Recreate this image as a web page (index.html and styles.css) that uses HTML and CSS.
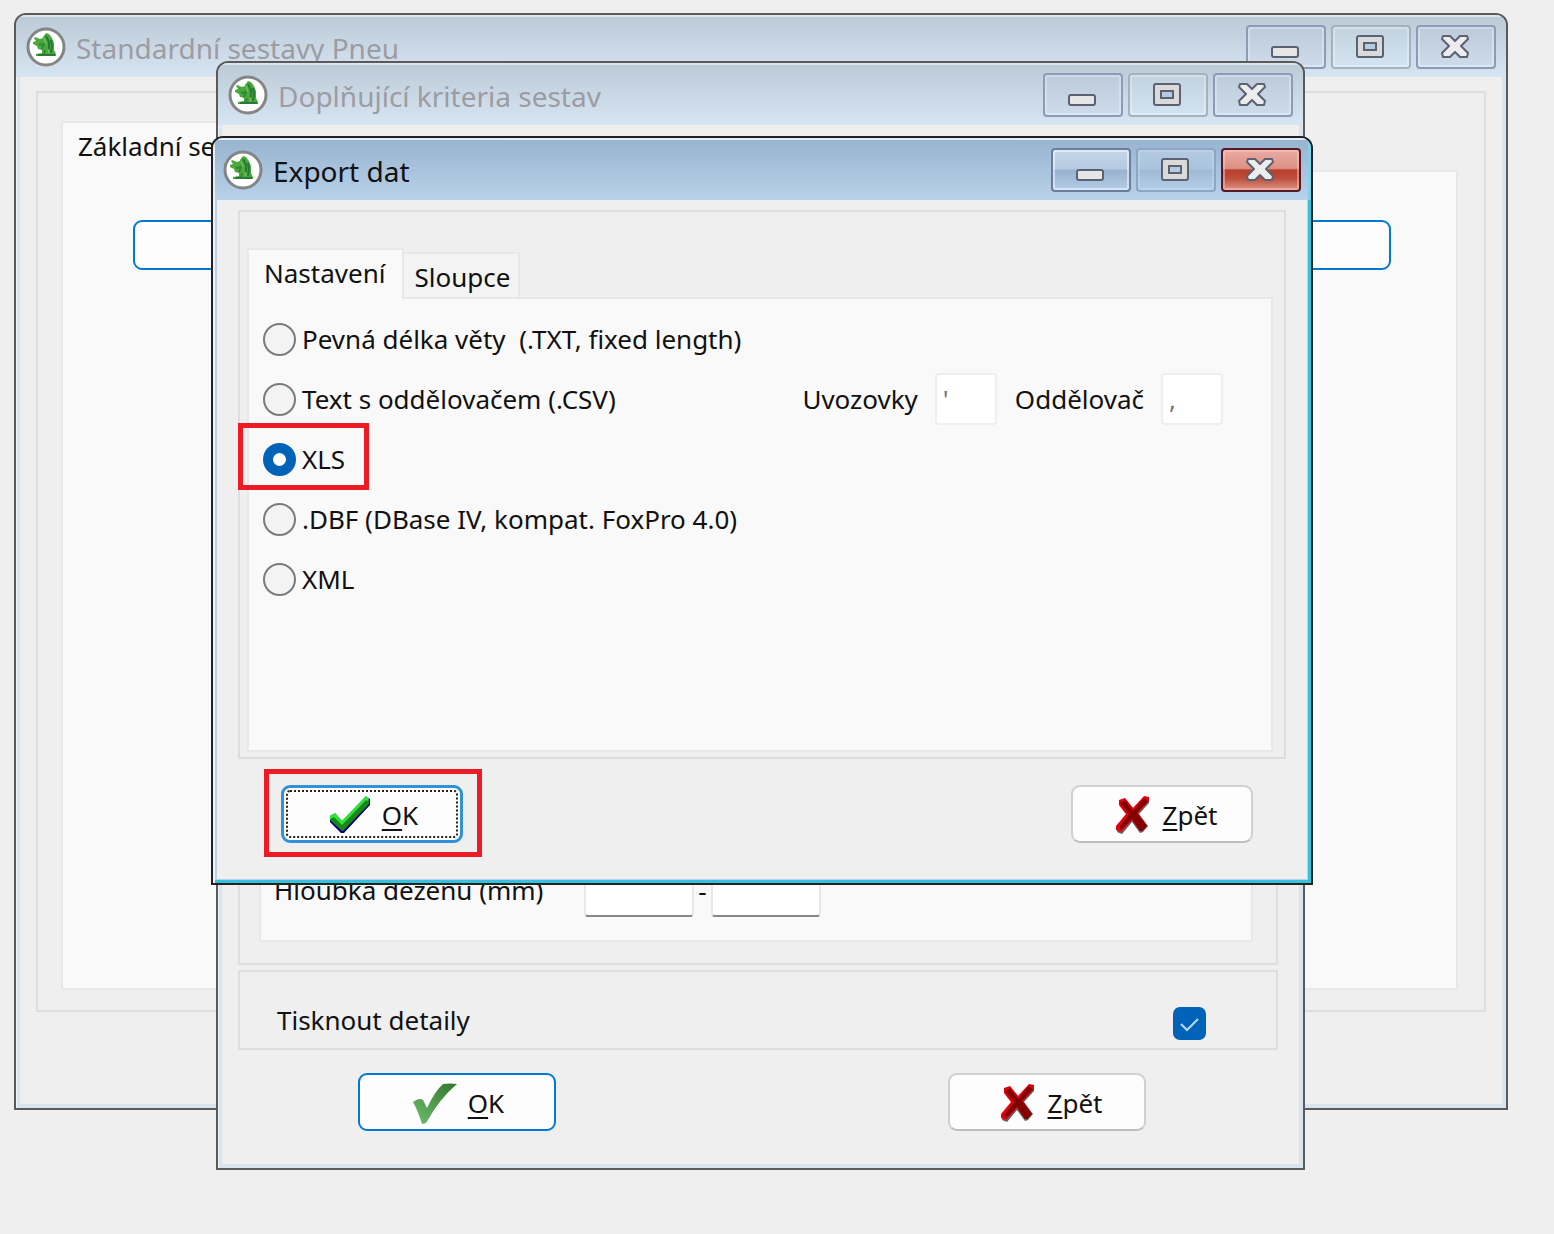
FILE: index.html
```
<!DOCTYPE html>
<html lang="cs">
<head>
  <meta charset="utf-8">
  <title>Export dat</title>
  <link rel="stylesheet" href="styles.css">
</head>
<body>
  <!-- shared icons -->
  <svg class="sprite" aria-hidden="true">
    <symbol id="logo" viewBox="0 0 40 40">
      <circle cx="20" cy="20" r="18" fill="#fff" stroke="#858585" stroke-width="3"/>
      <path d="M17 10l3-4 3 1 3 4 2 5v7l2 4v2H10v-2l6-1v-3l-4-1-1-3-4-2v-2l3-1-2-3 1-1 5 2 3-1z" fill="#4aa83c"/>
      <path d="M20 9l3 6v7M25 13l1 6-1 7M12 28h17" fill="none" stroke="#27783a" stroke-width="2"/>
      <path d="M13 18l5-1-2 5M19 23l-1 4" fill="none" stroke="#2f8a35" stroke-width="2"/>
      <path d="M18 11l2 6M22 23l1 3" fill="none" stroke="#86cc5a" stroke-width="1"/>
    </symbol>
    <symbol id="minimize" viewBox="0 0 28 24">
      <rect x="1" y="12" width="26" height="10" rx="2" fill="#e6e6e6" stroke="#5c6173" stroke-width="2"/>
    </symbol>
    <symbol id="maximize" viewBox="0 0 28 24">
      <rect x="1" y="1" width="26" height="21" rx="2" fill="#dadada" stroke="#5c6173" stroke-width="2"/>
      <rect x="8" y="8" width="12" height="7" fill="#b4cbe2" stroke="#5c6173" stroke-width="2"/>
    </symbol>
    <symbol id="close" viewBox="0 0 28 24">
      <path d="M2 1h7l5 5 5-5h7l1 3-7 7 7 7-1 4h-7l-5-5-5 5H2l-1-4 7-7-7-7z" fill="#ececec" stroke="#5c6173" stroke-width="2" stroke-linejoin="round"/>
    </symbol>
    <symbol id="check" viewBox="0 0 42 38">
      <path d="M1 20l5-2 7 8L37 1l4 2v6L15 37h-3L1 26z" fill="#00007b"/>
      <path d="M1 20l5-3 7 8L37 0l3 4v4L14 35h-1L1 24z" fill="#188818"/>
      <path d="M1 23v-3l5-3 7 8L37 0l3 4-2 1-1-1-24 25-8-8z" fill="#2be53c"/>
    </symbol>
    <symbol id="check-soft" viewBox="0 0 44 41">
      <linearGradient id="soft" x1="0" y1="1" x2="1" y2="0">
        <stop offset="0" stop-color="#70bd6c"/>
        <stop offset="1" stop-color="#30772e"/>
      </linearGradient>
      <path d="M0 19q6-5 10-2l4 8Q22 8 30 1q7-1 14 0Q27 15 13 40l-4 1Q5 28 0 19z" fill="url(#soft)"/>
    </symbol>
    <symbol id="cross" viewBox="0 0 34 38">
      <path d="M4 5l6-1 8 9L28 2l5 1v4L23 18l9 12-5 6-3 1-8-11L6 38l-5-2 1-5 9-12L4 10z" fill="#66605c"/>
      <path d="M3 4l6-2 8 10L28 0l5 1v4L22 17l9 13-5 5h-2l-8-11L5 36l-5-2v-4l10-12-7-9z" fill="#e5000c"/>
      <path d="M4 7l5-3 8 11L28 2l4 3-11 12 10 13-5 5h-2l-8-12L5 34l-2-3 10-13z" fill="#850000"/>
    </symbol>
  </svg>

  <main class="desktop">
    <section class="window window-reports">
      <header class="titlebar">
        <svg class="logo"><use href="#logo"/></svg>
        <h2>Standardní sestavy Pneu</h2>
        <div class="controls">
          <button type="button" aria-label="Minimalizovat"><svg><use href="#minimize"/></svg></button>
          <button type="button" class="disabled" aria-label="Maximalizovat"><svg><use href="#maximize"/></svg></button>
          <button type="button" aria-label="Zavřít"><svg><use href="#close"/></svg></button>
        </div>
      </header>
      <div class="client">
        <div class="group">
          <div class="tabs">
            <button type="button" class="tab active">Základní sestavy</button>
          </div>
          <div class="page">
            <button type="button" class="wide-btn" aria-label="Sestava"></button>
          </div>
        </div>
      </div>
    </section>

    <section class="window window-criteria">
      <header class="titlebar">
        <svg class="logo"><use href="#logo"/></svg>
        <h2>Doplňující kriteria sestav</h2>
        <div class="controls">
          <button type="button" aria-label="Minimalizovat"><svg><use href="#minimize"/></svg></button>
          <button type="button" class="disabled" aria-label="Maximalizovat"><svg><use href="#maximize"/></svg></button>
          <button type="button" aria-label="Zavřít"><svg><use href="#close"/></svg></button>
        </div>
      </header>
      <div class="client">
        <div class="group">
          <div class="page">
            <div class="range">
              <label for="depth-from">Hloubka dezénu (mm)</label>
              <input type="text" id="depth-from">
              <span>-</span>
              <input type="text" id="depth-to" aria-label="Hloubka dezénu do">
            </div>
          </div>
        </div>
        <div class="group details">
          <label for="print-details">Tisknout detaily</label>
          <input type="checkbox" id="print-details" checked>
        </div>
        <div class="buttons">
          <button type="button" class="btn default"><svg class="icon-soft"><use href="#check-soft"/></svg><span><u>O</u>K</span></button>
          <button type="button" class="btn cancel"><svg class="icon-cross"><use href="#cross"/></svg><span><u>Z</u>pět</span></button>
        </div>
      </div>
    </section>

    <section class="window window-export active">
      <header class="titlebar">
        <svg class="logo"><use href="#logo"/></svg>
        <h1>Export dat</h1>
        <div class="controls">
          <button type="button" aria-label="Minimalizovat"><svg><use href="#minimize"/></svg></button>
          <button type="button" class="disabled" aria-label="Maximalizovat"><svg><use href="#maximize"/></svg></button>
          <button type="button" class="close" aria-label="Zavřít"><svg><use href="#close"/></svg></button>
        </div>
      </header>
      <div class="client">
        <div class="group">
          <div class="tabs">
            <button type="button" class="tab active">Nastavení</button>
            <button type="button" class="tab">Sloupce</button>
          </div>
          <div class="page">
            <div class="row">
              <label class="option"><input type="radio" name="format">Pevná délka věty&nbsp; (.TXT, fixed length)</label>
            </div>
            <div class="row">
              <label class="option"><input type="radio" name="format">Text s oddělovačem (.CSV)</label>
              <div class="separators">
                <label for="quote">Uvozovky</label>
                <input type="text" id="quote" value="'">
                <label for="delimiter">Oddělovač</label>
                <input type="text" id="delimiter" value=",">
              </div>
            </div>
            <div class="row">
              <label class="option marked"><input type="radio" name="format" checked>XLS</label>
            </div>
            <div class="row">
              <label class="option"><input type="radio" name="format">.DBF (DBase IV, kompat. FoxPro 4.0)</label>
            </div>
            <div class="row">
              <label class="option"><input type="radio" name="format">XML</label>
            </div>
          </div>
        </div>
        <div class="buttons">
          <div class="marked">
            <button type="button" class="btn default focused"><svg class="icon-check"><use href="#check"/></svg><span><u>O</u>K</span></button>
          </div>
          <button type="button" class="btn cancel"><svg class="icon-cross"><use href="#cross"/></svg><span><u>Z</u>pět</span></button>
        </div>
      </div>
    </section>
  </main>
</body>
</html>
```
FILE: styles.css
```
:root {
  --face: #efefef;
  --page: #f9f9f9;
  --line: #dedede;
  --line-soft: #e8e8e8;
  --accent: #0078d4;
  --accent-fill: #0063b7;
  --mark: #ed1c24;
}

* {
  box-sizing: border-box;
}

body {
  margin: 0;
  background: var(--face);
  color: #111;
  font-family: Tahoma, "Noto Sans", sans-serif;
  font-size: 26px;
  line-height: 32px;
}

button, input {
  font: inherit;
  color: inherit;
}

.sprite {
  position: absolute;
  width: 0;
  height: 0;
}

.desktop {
  position: relative;
  min-height: 100vh;
  overflow: hidden;
}

/* Windows */
.window {
  position: absolute;
  display: flex;
  flex-direction: column;
  border: 2px solid #5a5a5a;
  border-radius: 12px 12px 0 0;
  background: #d9e4f1;
  box-shadow: inset 1px 1px 0 #f4f7fa;
  overflow: hidden;
}

.window-reports {
  inset: 13px 46px 124px 14px;
}

.window-criteria {
  inset: 61px 249px 64px 216px;
}

.window-export {
  inset: 136px 241px 349px 211px;
}

.window.active {
  border-color: #222;
  background: #bbd1ea;
  box-shadow: inset 2px 2px 0 #eef4fa, inset -3px -3px 0 #34c3dc;
}

.titlebar {
  display: flex;
  align-items: center;
  flex: none;
  height: 62px;
  padding: 4px 10px 0;
  background: linear-gradient(#bccad8, #d7e5f2);
  box-shadow: inset 0 2px 0 #dde5ed;
}

.active > .titlebar {
  background: linear-gradient(#98b3cf, #b9d1ea);
  box-shadow: inset 0 2px 0 #e4edf6, inset 2px 0 0 #e4edf6, inset -3px 0 0 #7ed3ea;
}

.logo {
  width: 40px;
  height: 40px;
  margin: 0 10px 2px 0;
}

.titlebar h1,
.titlebar h2 {
  flex: 1;
  margin: 0;
  font-family: "Segoe UI", "Noto Sans", sans-serif;
  font-size: 28px;
  font-weight: 400;
  white-space: nowrap;
}

.titlebar h2 {
  color: #9c9ca2;
}

.controls {
  display: flex;
  gap: 5px;
  margin-bottom: 2px;
}

.controls button {
  display: flex;
  align-items: center;
  justify-content: center;
  width: 80px;
  height: 44px;
  padding: 0 2px 0 0;
  border: 2px solid #8d9bb8;
  border-radius: 4px;
  background: linear-gradient(#bccada, #cddbeb);
  box-shadow: inset 0 0 0 2px rgba(255, 255, 255, 0.3);
}

.controls .disabled {
  border-color: #a3b2c0;
  background: linear-gradient(#c2d2df, #d4e3f0);
}

.controls svg {
  width: 28px;
  height: 24px;
}

.active > .titlebar .controls button {
  border-color: #6a7f9f;
  background: linear-gradient(#c5d7ea, #b5cae0 48%, #98b2ce 50%, #b3cce6);
  box-shadow: inset 0 0 0 2px rgba(255, 255, 255, 0.5);
}

.active > .titlebar .controls .disabled {
  border-color: #8ca7c6;
  background: linear-gradient(#b2c9e1, #abc4de 48%, #a0bad5 50%, #b4cde7);
  box-shadow: inset 0 0 0 2px rgba(255, 255, 255, 0.15);
}

.active > .titlebar .controls .close {
  border-color: #541a26;
  background: linear-gradient(#e9aca2, #dd8f84 46%, #b8402c 50%, #bd4c3a 70%, #dc9385);
  box-shadow: inset 0 0 0 2px rgba(255, 200, 190, 0.5);
}

.client {
  display: flex;
  flex: 1;
  flex-direction: column;
  min-height: 0;
  margin: 0 4px 4px;
  background: var(--face);
}

.group {
  display: flex;
  flex-direction: column;
  border: 2px solid var(--line);
}

.page {
  flex: 1;
  border: 2px solid var(--line-soft);
  background: var(--page);
}

/* Tabs */
.tabs {
  display: flex;
  align-items: flex-end;
}

.tab {
  height: 45px;
  padding: 2px 8px 0 10px;
  border: 2px solid var(--line-soft);
  border-left: 0;
  border-bottom: 0;
  background: #f3f3f3;
}

.tab.active {
  position: relative;
  height: 51px;
  margin-bottom: -2px;
  padding: 0 17px 4px 15px;
  border-left: 2px solid var(--line-soft);
  background: var(--page);
}

/* Buttons */
.buttons {
  display: flex;
  justify-content: space-between;
}

.btn {
  display: flex;
  align-items: center;
  justify-content: center;
  gap: 11px;
  width: 182px;
  height: 58px;
  padding: 2px 0 0 3px;
  border: 2px solid #d0d0d0;
  border-radius: 9px;
  background: #fdfdfd;
}

.btn.cancel {
  gap: 13px;
  padding-left: 9px;
  border-bottom-color: #bdbdbd;
}

.btn.default {
  border-color: var(--accent);
}

.btn.focused {
  border: 3px solid #3090d8;
  outline: 2px dotted #222;
  outline-offset: -7px;
}

.btn u {
  text-decoration-thickness: 2px;
  text-underline-offset: 4px;
}

.icon-check {
  width: 42px;
  height: 38px;
}

.icon-soft {
  width: 44px;
  height: 41px;
}

.icon-cross {
  width: 34px;
  height: 38px;
}

/* Red frames round the marked controls */
.marked {
  position: relative;
}

.marked::after {
  content: "";
  position: absolute;
  inset: -16px -19px -14px -17px;
  border: 5px solid var(--mark);
  pointer-events: none;
}

.option.marked::after {
  inset: -20px -24px -14px -25px;
}

/* Reports window */
.window-reports .group {
  flex: 1;
  margin: 14px 16px 92px;
  padding: 28px 26px 20px 23px;
}

.window-reports .page {
  padding: 48px 65px 0 70px;
}

.wide-btn {
  width: 100%;
  height: 50px;
  border: 2px solid var(--accent);
  border-radius: 9px;
  background: #fdfdfd;
}

/* Criteria window */
.window-criteria .client {
  padding: 14px 21px 33px 16px;
}

.window-criteria .group {
  flex: 1;
  padding: 28px 23px 21px 19px;
}

.window-criteria .page {
  display: flex;
  flex-direction: column;
  justify-content: flex-end;
  padding: 0 12px 23px 13px;
}

.range {
  display: flex;
  align-items: center;
}

.range label {
  width: 310px;
  padding-bottom: 2px;
}

.range span {
  width: 17px;
  text-align: center;
}

.range input {
  width: 110px;
  height: 52px;
  border: 2px solid var(--line-soft);
  border-bottom-color: #868686;
  border-radius: 4px;
  background: #fff;
}

.window-criteria .details {
  flex: none;
  flex-direction: row;
  align-items: center;
  justify-content: space-between;
  height: 80px;
  margin-top: 5px;
  padding: 20px 70px 0 37px;
}

input[type="checkbox"] {
  appearance: none;
  width: 33px;
  height: 33px;
  margin: 6px 0 0;
  border-radius: 7px;
  background: var(--accent-fill) url("data:image/svg+xml,%3Csvg xmlns='http://www.w3.org/2000/svg' viewBox='0 0 33 33'%3E%3Cpath d='M8 17l6 6 11-11' fill='none' stroke='%23b8d8f2' stroke-width='2'/%3E%3C/svg%3E");
}

.window-criteria .buttons {
  padding: 23px 132px 0 120px;
}

.window-criteria .btn {
  width: 198px;
}

/* Export window */
.window-export .client {
  padding: 10px 21px 36px;
}

.window-export .group {
  flex: 1;
  padding: 36px 11px 5px 7px;
}

.window-export .page {
  padding: 10px 14px;
}

.row {
  display: flex;
  align-items: center;
  justify-content: space-between;
  height: 60px;
}

.option {
  display: flex;
  align-items: center;
  gap: 6px;
}

input[type="radio"] {
  appearance: none;
  width: 33px;
  height: 33px;
  margin: 0;
  border: 2px solid #7b7b7b;
  border-radius: 50%;
  background: #f3f3f3;
}

input[type="radio"]:checked {
  border: 10px solid var(--accent-fill);
  background: #fff;
}

.separators {
  display: flex;
  align-items: center;
  margin-right: 34px;
}

.separators input {
  width: 62px;
  height: 52px;
  margin: 0 18px 0 17px;
  padding: 0 6px;
  border: 2px solid #efefef;
  border-radius: 4px;
  background: #fff;
  color: #777;
}

.separators input:last-child {
  margin-right: 0;
}

.window-export .buttons {
  padding: 26px 33px 0 43px;
}
```
